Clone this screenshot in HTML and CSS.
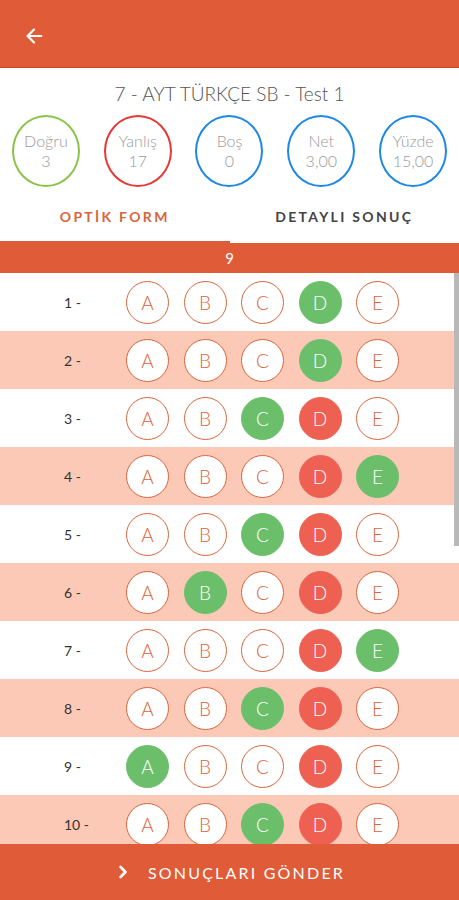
FILE: index.html
```html
<!DOCTYPE html>
<html lang="tr">
  <head>
    <meta charset="UTF-8" />
    <meta name="viewport" content="width=device-width, initial-scale=1.0" />
    <title>Optik Form</title>
    <link rel="stylesheet" href="styles.css">
  </head>

  <body>
    <div class="app">
      <div class="topbar">
        <svg class="back" width="22" height="22" viewBox="0 0 24 24">
          <path d="M20 12H5M12 5l-7 7 7 7" fill="none" stroke="#fff" stroke-width="2.4" stroke-linecap="round" stroke-linejoin="round" />
        </svg>
      </div>

      <div class="info">
        <div class="title">7 - AYT TÜRKÇE SB - Test 1</div>
        <div class="stats">
          <div class="stat"><div class="ring green"><span>Doğru</span><span>3</span></div></div>
          <div class="stat"><div class="ring red"><span>Yanlış</span><span>17</span></div></div>
          <div class="stat"><div class="ring blue"><span>Boş</span><span>0</span></div></div>
          <div class="stat"><div class="ring blue"><span>Net</span><span>3,00</span></div></div>
          <div class="stat"><div class="ring blue"><span>Yüzde</span><span>15,00</span></div></div>
        </div>
      </div>

      <div class="tabs">
        <div class="tab active">OPTİK FORM</div>
        <div class="tab">DETAYLI SONUÇ</div>
      </div>

      <div class="section">9</div>

      <div class="list">
        <div class="row">
          <span class="num">1 -</span>
          <span class="opt">A</span><span class="opt">B</span><span class="opt">C</span><span class="opt ok">D</span><span class="opt">E</span>
        </div>
        <div class="row alt">
          <span class="num">2 -</span>
          <span class="opt">A</span><span class="opt">B</span><span class="opt">C</span><span class="opt ok">D</span><span class="opt">E</span>
        </div>
        <div class="row">
          <span class="num">3 -</span>
          <span class="opt">A</span><span class="opt">B</span><span class="opt ok">C</span><span class="opt bad">D</span><span class="opt">E</span>
        </div>
        <div class="row alt">
          <span class="num">4 -</span>
          <span class="opt">A</span><span class="opt">B</span><span class="opt">C</span><span class="opt bad">D</span><span class="opt ok">E</span>
        </div>
        <div class="row">
          <span class="num">5 -</span>
          <span class="opt">A</span><span class="opt">B</span><span class="opt ok">C</span><span class="opt bad">D</span><span class="opt">E</span>
        </div>
        <div class="row alt">
          <span class="num">6 -</span>
          <span class="opt">A</span><span class="opt ok">B</span><span class="opt">C</span><span class="opt bad">D</span><span class="opt">E</span>
        </div>
        <div class="row">
          <span class="num">7 -</span>
          <span class="opt">A</span><span class="opt">B</span><span class="opt">C</span><span class="opt bad">D</span><span class="opt ok">E</span>
        </div>
        <div class="row alt">
          <span class="num">8 -</span>
          <span class="opt">A</span><span class="opt">B</span><span class="opt ok">C</span><span class="opt bad">D</span><span class="opt">E</span>
        </div>
        <div class="row">
          <span class="num">9 -</span>
          <span class="opt ok">A</span><span class="opt">B</span><span class="opt">C</span><span class="opt bad">D</span><span class="opt">E</span>
        </div>
        <div class="row alt">
          <span class="num">10 -</span>
          <span class="opt">A</span><span class="opt">B</span><span class="opt ok">C</span><span class="opt bad">D</span><span class="opt">E</span>
        </div>
        <div class="scrollbar"></div>
      </div>

      <div class="send">
        <svg class="chev" width="10" height="14" viewBox="0 0 10 14">
          <path d="M2.5 2l5 5-5 5" fill="none" stroke="#fff" stroke-width="2.6" stroke-linecap="round" stroke-linejoin="round" />
        </svg>
        <span>SONUÇLARI GÖNDER</span>
      </div>
    </div>
  </body>
</html>
```

FILE: styles.css
```css
body {
  margin: 0;
  font-family: Lato, "Open Sans", sans-serif;
  background: #fff;
}

.app {
  width: 459px;
  height: 900px;
  display: flex;
  flex-direction: column;
  overflow: hidden;
}

.topbar {
  height: 68px;
  flex: none;
  background: #e05b37;
  border-bottom: 1px solid #c94a28;
  box-sizing: border-box;
  display: flex;
  align-items: center;
  padding-left: 23px;
  padding-top: 5px;
}

.info {
  flex: none;
  padding-top: 15px;
}

.title {
  text-align: center;
  font-size: 19px;
  line-height: 22px;
  color: #555;
  font-weight: 300;
}

.stats {
  display: grid;
  grid-template-columns: repeat(5, 1fr);
  margin-top: 10px;
}

.stat {
  display: flex;
  justify-content: center;
}

.ring {
  width: 64px;
  height: 68px;
  border: 2px solid #999;
  border-radius: 50%;
  display: flex;
  flex-direction: column;
  align-items: center;
  justify-content: center;
  color: #9a9a9a;
  font-size: 16px;
  font-weight: 300;
  line-height: 20px;
}

.ring.green { border-color: #8bc34a; }
.ring.red { border-color: #e53935; }
.ring.blue { border-color: #1e88e5; }

.tabs {
  flex: none;
  display: flex;
  height: 56px;
}

.tab {
  flex: 1;
  text-align: center;
  padding-top: 22px;
  font-size: 14px;
  font-weight: 700;
  letter-spacing: 2.3px;
  color: #444;
  line-height: 16px;
  box-sizing: border-box;
}

.tab.active {
  color: #d9653c;
  border-bottom: 2px solid #e05b37;
}

.section {
  flex: none;
  height: 30px;
  background: #e05b37;
  color: #fff;
  text-align: center;
  line-height: 30px;
  font-size: 15px;
}

.list {
  flex: 1;
  position: relative;
  overflow: hidden;
}

.row {
  height: 58px;
  display: flex;
  align-items: center;
  padding-left: 64px;
  background: #fff;
}

.row.alt {
  background: #fdc9b7;
}

.num {
  width: 62px;
  font-size: 14px;
  color: #333;
}

.opt {
  width: 43px;
  height: 43px;
  box-sizing: border-box;
  border: 1.5px solid #d9653c;
  border-radius: 50%;
  background: #fff;
  color: #d9653c;
  margin-right: 14.5px;
  display: flex;
  align-items: center;
  justify-content: center;
  font-size: 19px;
  font-weight: 300;
}

.opt.ok {
  background: #6cbf6a;
  border-color: #6cbf6a;
  color: #fff;
}

.opt.bad {
  background: #ee6052;
  border-color: #ee6052;
  color: #fff;
}

.scrollbar {
  position: absolute;
  top: 0;
  right: 0;
  width: 5px;
  height: 273px;
  background: #b8b8b8;
}

.send {
  flex: none;
  height: 56px;
  background: #e05b37;
  color: #fff;
  display: flex;
  align-items: center;
  justify-content: center;
  font-size: 16px;
  letter-spacing: 2.2px;
  font-weight: 400;
  padding-left: 4px;
}

.chev {
  margin-right: 20px;
}
```
